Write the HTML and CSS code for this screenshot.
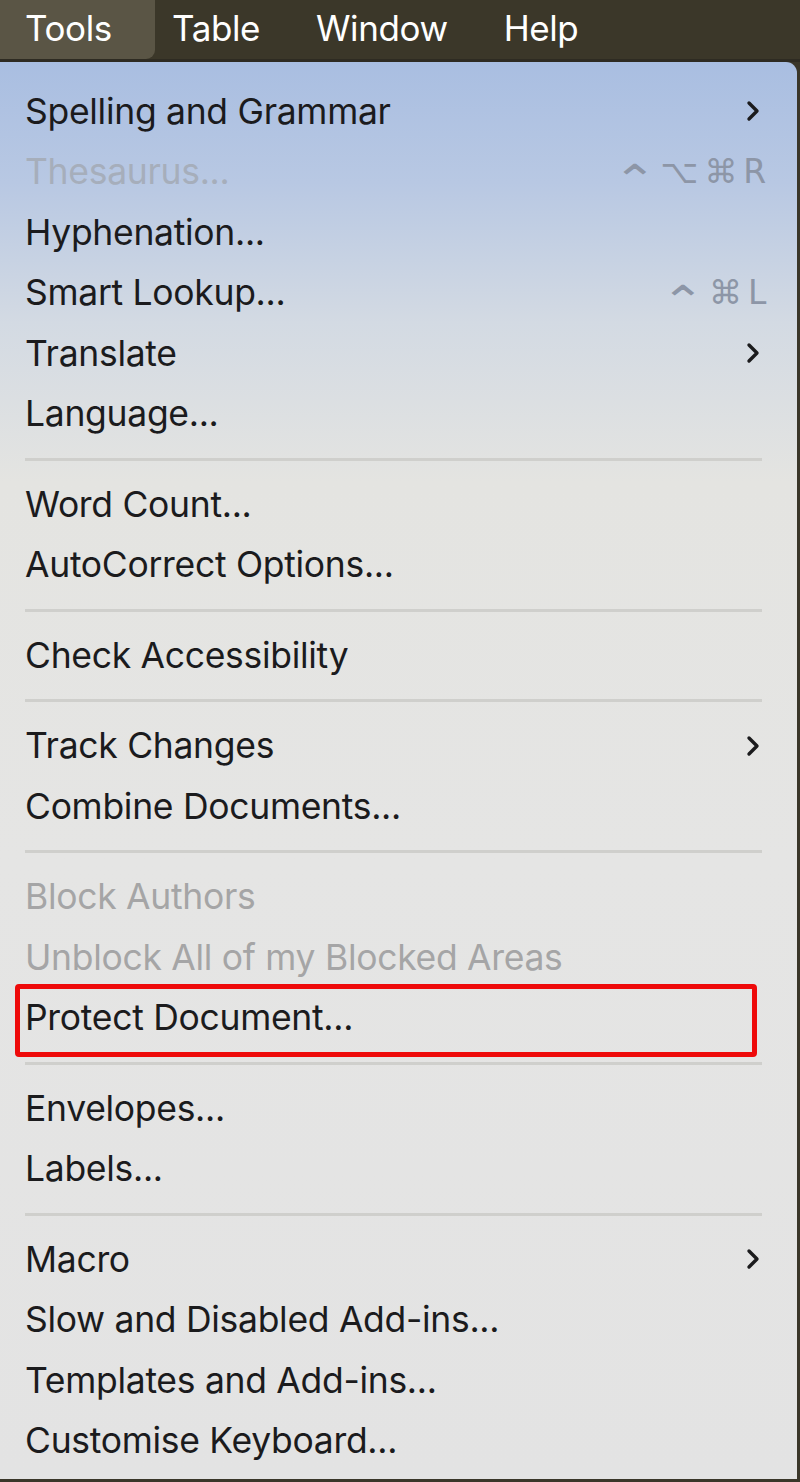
FILE: index.html
```html
<!DOCTYPE html>
<html>
<head>
  <meta charset="utf-8">
  <title>Tools menu</title>
  <link rel="stylesheet" href="styles.css">
</head>
<body>
  <div class="menubar">
    <div class="menubar-item active">Tools</div>
    <div class="menubar-item">Table</div>
    <div class="menubar-item">Window</div>
    <div class="menubar-item">Help</div>
  </div>

  <div class="menu">
    <div class="item">Spelling and Grammar <svg class="chevron" viewBox="0 0 14 22"><path d="M3 3 L11 11 L3 19"/></svg></div>
    <div class="item disabled">Thesaurus... <span class="shortcut"><span class="ctrl">⌃</span> ⌥ ⌘ R</span></div>
    <div class="item">Hyphenation...</div>
    <div class="item">Smart Lookup... <span class="shortcut"><span class="ctrl">⌃</span> ⌘ L</span></div>
    <div class="item">Translate <svg class="chevron" viewBox="0 0 14 22"><path d="M3 3 L11 11 L3 19"/></svg></div>
    <div class="item">Language...</div>
    <div class="separator"></div>
    <div class="item">Word Count...</div>
    <div class="item">AutoCorrect Options...</div>
    <div class="separator"></div>
    <div class="item">Check Accessibility</div>
    <div class="separator"></div>
    <div class="item">Track Changes <svg class="chevron" viewBox="0 0 14 22"><path d="M3 3 L11 11 L3 19"/></svg></div>
    <div class="item">Combine Documents...</div>
    <div class="separator"></div>
    <div class="item disabled">Block Authors</div>
    <div class="item disabled">Unblock All of my Blocked Areas</div>
    <div class="item marked">Protect Document...</div>
    <div class="separator"></div>
    <div class="item">Envelopes...</div>
    <div class="item">Labels...</div>
    <div class="separator"></div>
    <div class="item">Macro <svg class="chevron" viewBox="0 0 14 22"><path d="M3 3 L11 11 L3 19"/></svg></div>
    <div class="item">Slow and Disabled Add-ins...</div>
    <div class="item">Templates and Add-ins...</div>
    <div class="item">Customise Keyboard...</div>
  </div>
</body>
</html>
```

FILE: styles.css
```css
* {
  margin: 0;
  padding: 0;
  box-sizing: border-box;
}

body {
  font-family: Inter, "Liberation Sans", sans-serif;
  background: #3a3629;
  width: 800px;
  height: 1482px;
  overflow: hidden;
}

.menubar {
  height: 62px;
  display: flex;
  align-items: stretch;
  gap: 56px;
  background: #3b3729;
  color: #fff;
  font-size: 35px;
  letter-spacing: -0.4px;
  border-bottom: 3px solid #2e2b22;
}

.menubar-item {
  display: flex;
  align-items: center;
  padding-bottom: 4px;
}

.menubar-item.active {
  width: 155px;
  margin-right: -39px;
  padding-left: 25px;
  background: #5a5545;
  border-radius: 0 0 9px 0;
}

.menu {
  width: 797px;
  height: 1417px;
  padding: 19px 0 6px;
  border-radius: 0 11px 0 0;
  background: linear-gradient(180deg, #a9bee1 0px, #b8c8e3 120px, #d3dae3 260px, #e4e4e1 420px, #e5e5e4 800px, #e3e3e3 100%);
}

.item {
  position: relative;
  height: 60.5px;
  display: flex;
  align-items: center;
  justify-content: space-between;
  padding: 0 34px 0 25px;
  font-size: 35.5px;
  color: #1b1b1d;
  letter-spacing: -0.3px;
}

.item.disabled {
  color: #a6aebb;
}

.item.disabled:nth-child(n+10) {
  color: #a5a5a6;
}

.shortcut {
  color: #8d96a7;
  font-family: "DejaVu Sans", sans-serif;
  font-size: 33px;
  margin-right: -3px;
  word-spacing: -4px;
}

.ctrl {
  display: inline-block;
  transform: translateY(9px) scale(1.6, 1.3);
  margin-right: 6px;
}

.chevron {
  width: 14px;
  height: 22px;
  fill: none;
  stroke: #1b1b1d;
  stroke-width: 3.4;
  stroke-linecap: round;
  stroke-linejoin: round;
  margin-right: 3px;
}

.separator {
  height: 3px;
  margin: 13.5px 35px 13.5px 25px;
  background: #cfcfcc;
}

.marked::after {
  content: "";
  position: absolute;
  left: 15px;
  right: 40px;
  top: -4px;
  bottom: -9px;
  border: 5px solid #ee0a0a;
  border-radius: 4px;
}
```
